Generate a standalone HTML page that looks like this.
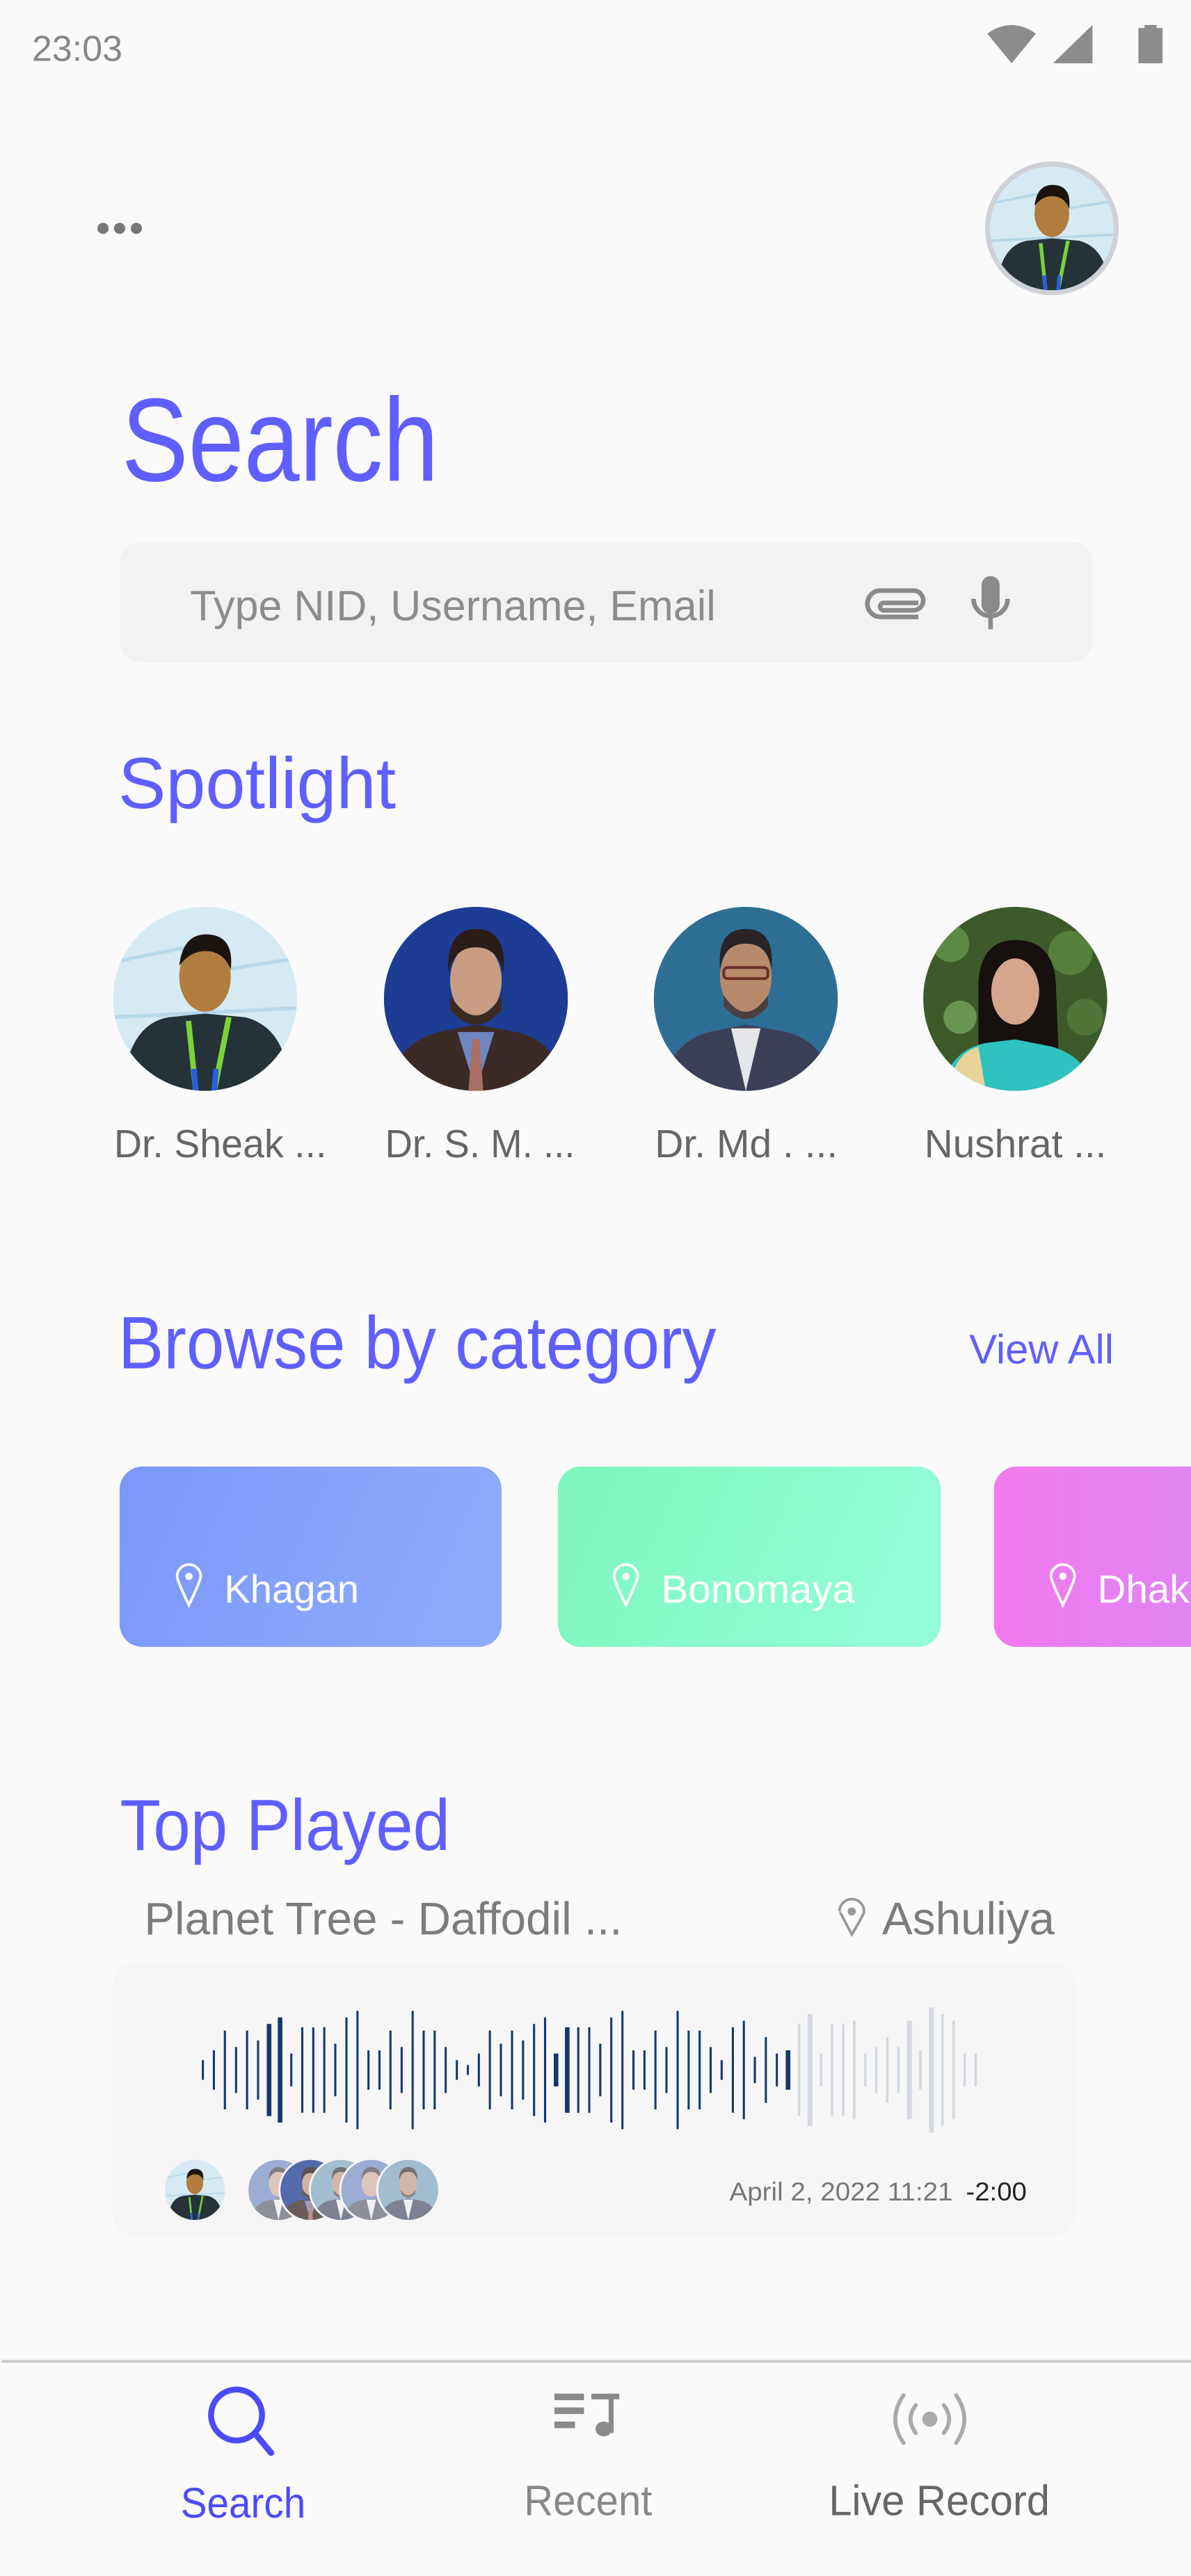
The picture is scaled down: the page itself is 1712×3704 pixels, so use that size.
<!DOCTYPE html>
<html><head><meta charset="utf-8">
<style>
html,body{margin:0;padding:0;background:#fafafa;width:1712px;height:3704px;overflow:hidden}
svg{display:block}
text{font-family:"Liberation Sans",Arial,sans-serif}
</style></head>
<body>
<svg width="1712" height="3704" viewBox="0 0 725 1568" preserveAspectRatio="none" xmlns="http://www.w3.org/2000/svg">
<defs>
<clipPath id="cc"><circle cx="50" cy="50" r="50"/></clipPath>
<linearGradient id="gb" x1="0" x2="1" y1="0" y2="0.2"><stop offset="0" stop-color="#7b97f8"/><stop offset="1" stop-color="#8eaafc"/></linearGradient>
<linearGradient id="gg" x1="0" x2="1" y1="0" y2="0.2"><stop offset="0" stop-color="#7ef6bb"/><stop offset="1" stop-color="#93fdd8"/></linearGradient>
<linearGradient id="gp" x1="0" x2="1"><stop offset="0" stop-color="#f27aee"/><stop offset="1" stop-color="#dd86f2"/></linearGradient>
<symbol id="p1" viewBox="0 0 100 100"><g clip-path="url(#cc)">
<rect width="100" height="100" fill="#d6eaf3"/>
<path d="M0 30 L40 22 M55 35 L100 28 M0 60 L100 55" stroke="#b5d8ea" stroke-width="2" fill="none"/>
<path d="M5 100 Q8 64 30 60 L50 58 L72 60 Q95 66 96 100Z" fill="#253338"/>
<ellipse cx="50" cy="38" rx="14" ry="19" fill="#b07d3e"/>
<path d="M36 32 Q38 14 52 15 Q66 16 64 34 Q60 24 50 24 Q42 24 36 32Z" fill="#1a140f"/>
<path d="M41 62 L45 100 M63 60 L55 100" stroke="#7bd33a" stroke-width="3"/>
<path d="M44 88 L45 100 M56 88 L55 100" stroke="#2a5ee0" stroke-width="3"/>
</g></symbol>
<symbol id="p2" viewBox="0 0 100 100"><g clip-path="url(#cc)">
<rect width="100" height="100" fill="#1d3c93"/>
<path d="M2 100 Q6 74 30 68 L50 64 L72 68 Q96 74 98 100Z" fill="#3b2925"/>
<path d="M40 68 L50 100 L60 68Z" fill="#6f86c0"/>
<path d="M48 72 L52 72 L54 100 L46 100Z" fill="#a96e66"/>
<ellipse cx="50" cy="40" rx="14" ry="20" fill="#c99c84"/>
<path d="M36 48 Q50 70 64 48 L64 56 Q50 72 36 56Z" fill="#3a2a22"/>
<path d="M35 36 Q34 12 50 12 Q67 12 65 36 Q62 22 50 22 Q38 22 35 36Z" fill="#2a1c16"/>
</g></symbol>
<symbol id="p3" viewBox="0 0 100 100"><g clip-path="url(#cc)">
<rect width="100" height="100" fill="#2f6e94"/>
<path d="M4 100 Q8 74 30 68 L50 64 L72 68 Q95 74 97 100Z" fill="#3c3f58"/>
<path d="M42 66 L50 100 L58 66Z" fill="#e4e6ea"/>
<ellipse cx="50" cy="38" rx="14" ry="20" fill="#b88a6c"/>
<path d="M38 48 Q50 66 62 48 L62 54 Q50 68 38 54Z" fill="#4a4040"/>
<rect x="38" y="33" width="24" height="6" rx="2" fill="none" stroke="#6b2e2a" stroke-width="1.5"/>
<path d="M36 34 Q34 12 50 12 Q66 12 64 34 Q62 20 50 20 Q38 20 36 34Z" fill="#2a2426"/>
</g></symbol>
<symbol id="p4" viewBox="0 0 100 100"><g clip-path="url(#cc)">
<rect width="100" height="100" fill="#3d5a2b"/>
<circle cx="15" cy="20" r="10" fill="#5c8a45"/><circle cx="80" cy="25" r="12" fill="#567f3c"/><circle cx="20" cy="60" r="9" fill="#6a9650"/><circle cx="88" cy="60" r="10" fill="#4f7538"/>
<path d="M30 100 L30 40 Q32 18 50 18 Q70 18 72 40 L74 90 L30 100Z" fill="#16100e"/>
<path d="M10 100 Q14 78 34 74 L50 72 L70 76 Q90 82 92 100Z" fill="#2ec2c0"/>
<path d="M14 100 Q16 80 30 76 L34 100Z" fill="#e8d49a"/>
<ellipse cx="50" cy="46" rx="13" ry="18" fill="#d6a68c"/>
</g></symbol>
<symbol id="p5" viewBox="0 0 100 100"><g clip-path="url(#cc)">
<rect width="100" height="100" fill="#7d95c8"/>
<path d="M4 100 Q8 74 30 68 L50 64 L72 68 Q95 74 97 100Z" fill="#6c6e7a"/>
<path d="M42 66 L50 100 L58 66Z" fill="#eef0f3"/>
<ellipse cx="50" cy="40" rx="16" ry="21" fill="#d8b6a6"/>
<path d="M34 34 Q34 12 50 12 Q66 12 66 34 Q62 20 50 20 Q38 20 34 34Z" fill="#5b5656"/>
</g></symbol>
<symbol id="p6" viewBox="0 0 100 100"><g clip-path="url(#cc)">
<rect width="100" height="100" fill="#86abc4"/>
<path d="M4 100 Q8 74 30 68 L50 64 L72 68 Q95 74 97 100Z" fill="#555a70"/>
<path d="M42 66 L50 100 L58 66Z" fill="#eef0f3"/>
<ellipse cx="50" cy="40" rx="15" ry="21" fill="#c7a290"/>
<path d="M38 50 Q50 68 62 50 L62 56 Q50 70 38 56Z" fill="#6a5e5a"/>
<path d="M35 34 Q34 12 50 12 Q66 12 65 34 Q62 20 50 20 Q38 20 35 34Z" fill="#4a4446"/>
</g></symbol>
</defs>

<rect width="725" height="1568" fill="#fafafa"/>

<!-- status bar -->
<text x="19.5" y="37" font-size="22" fill="#888">23:03</text>
<path d="M601 20.5 Q615.8 10 630.6 20.5 L615.8 38.5Z" fill="#8c8c8c"/>
<path d="M641 38.5 L665 15.2 L665 38.5Z" fill="#8c8c8c"/>
<rect x="696.7" y="15.2" width="7.3" height="2.5" fill="#8c8c8c"/>
<rect x="693" y="17" width="14.7" height="21.5" fill="#8c8c8c"/>

<!-- dots + avatar -->
<circle cx="62.7" cy="139" r="3.4" fill="#777"/><circle cx="72.8" cy="139" r="3.4" fill="#777"/><circle cx="83" cy="139" r="3.4" fill="#777"/>
<circle cx="640.3" cy="139" r="40.7" fill="#cfd1d6"/>
<use href="#p1" x="602.6" y="101.3" width="75.4" height="75.4"/>

<!-- title -->
<text x="74" y="292.6" font-size="72" fill="#5f5fff" textLength="193" lengthAdjust="spacingAndGlyphs">Search</text>

<!-- search box -->
<rect x="73" y="330" width="592" height="73" rx="12" fill="#f2f2f2"/>
<text x="115.7" y="377.6" font-size="26" fill="#8c8c8c" textLength="320" lengthAdjust="spacingAndGlyphs">Type NID, Username, Email</text>
<path d="M559 375.5 H536 A8 8 0 0 1 536 359.5 H556 A6 6 0 0 1 556 371.5 H538 A2.2 2.2 0 0 1 538 367 H559" fill="none" stroke="#8a8a8a" stroke-width="2.8"/>
<rect x="597.5" y="350.6" width="11" height="23" rx="5.5" fill="#8a8a8a"/>
<path d="M592.6 364.5 A10.4 10.4 0 0 0 613.4 364.5" fill="none" stroke="#8a8a8a" stroke-width="2.8"/>
<rect x="601.6" y="374" width="2.8" height="9" fill="#8a8a8a"/>

<!-- spotlight -->
<text x="72" y="492" font-size="44" fill="#5f5fff" textLength="169" lengthAdjust="spacingAndGlyphs">Spotlight</text>
<use href="#p1" x="68.8" y="552" width="112" height="112"/>
<use href="#p2" x="233.7" y="552" width="112" height="112"/>
<use href="#p3" x="398" y="552" width="112" height="112"/>
<use href="#p4" x="562" y="552" width="112" height="112"/>
<text x="69.4" y="704.5" font-size="24" fill="#666" textLength="129.4" lengthAdjust="spacingAndGlyphs">Dr. Sheak ...</text>
<text x="234.4" y="704.5" font-size="24" fill="#666" textLength="115.6" lengthAdjust="spacingAndGlyphs">Dr. S. M. ...</text>
<text x="398.6" y="704.5" font-size="24" fill="#666" textLength="111.4" lengthAdjust="spacingAndGlyphs">Dr. Md . ...</text>
<text x="562.7" y="704.5" font-size="24" fill="#666" textLength="110.8" lengthAdjust="spacingAndGlyphs">Nushrat ...</text>

<!-- browse -->
<text x="72" y="833" font-size="45" fill="#5f5fff" textLength="364" lengthAdjust="spacingAndGlyphs">Browse by category</text>
<text x="590" y="830" font-size="25" fill="#5f5fff" textLength="88" lengthAdjust="spacingAndGlyphs">View All</text>

<rect x="72.8" y="892.7" width="232.6" height="109.8" rx="14" fill="url(#gb)"/>
<rect x="339.6" y="892.7" width="233" height="109.8" rx="14" fill="url(#gg)"/>
<rect x="605" y="892.7" width="140" height="109.8" rx="14" fill="url(#gp)"/>
<g fill="none" stroke="#fff" stroke-width="1.6">
<path d="M115 977 Q107.8 962 107.8 959.5 A7.2 7.2 0 0 1 122.2 959.5 Q122.2 962 115 977Z"/>
<path d="M381 977 Q373.8 962 373.8 959.5 A7.2 7.2 0 0 1 388.2 959.5 Q388.2 962 381 977Z"/>
<path d="M647 977 Q639.8 962 639.8 959.5 A7.2 7.2 0 0 1 654.2 959.5 Q654.2 962 647 977Z"/>
</g>
<circle cx="115" cy="959.5" r="2.2" fill="#fff"/><circle cx="381" cy="959.5" r="2.2" fill="#fff"/><circle cx="647" cy="959.5" r="2.2" fill="#fff"/>
<text x="136.5" y="975.5" font-size="24" fill="#fff" textLength="82" lengthAdjust="spacingAndGlyphs">Khagan</text>
<text x="402.5" y="975.5" font-size="24" fill="#fff" textLength="118" lengthAdjust="spacingAndGlyphs">Bonomaya</text>
<text x="668" y="975.5" font-size="24" fill="#fff">Dhaka</text>

<!-- top played -->
<text x="73" y="1126" font-size="44" fill="#5f5fff" textLength="201" lengthAdjust="spacingAndGlyphs">Top Played</text>
<text x="87.8" y="1177.5" font-size="28" fill="#7c7c7c" textLength="291" lengthAdjust="spacingAndGlyphs">Planet Tree - Daffodil ...</text>
<path d="M518.5 1177.5 Q511 1163 511 1163.5 A7.5 7.5 0 0 1 526 1163.5 Q526 1165 518.5 1177.5Z" fill="none" stroke="#999" stroke-width="1.6"/>
<circle cx="518.5" cy="1163.5" r="2.5" fill="#999"/>
<text x="537" y="1177.5" font-size="28" fill="#7c7c7c" textLength="105" lengthAdjust="spacingAndGlyphs">Ashuliya</text>

<rect x="68.4" y="1194" width="587.2" height="168" rx="16" fill="#f6f6f6"/>
<path stroke="#12386f" stroke-width="1.3" fill="none" d="M123.5 1254v12M130.2 1248v24M136.9 1236v48M143.7 1246v28M150.4 1236v48M157.1 1242v36M163.8 1232v56M170.5 1228v64M177.3 1250v20M184 1234v52M190.7 1234v52M197.4 1234v52M204.1 1244v32M210.9 1228v64M217.6 1224v72M224.3 1248v24M231 1248v24M237.7 1236v48M244.5 1246v28M251.2 1224v72M257.9 1236v48M264.6 1236v48M271.3 1246v28M278.1 1254v12M284.8 1257v6M291.5 1250v20M298.2 1236v48M304.9 1244v32M311.7 1236v48M318.4 1242v36M325.1 1232v56M331.8 1228v64M338.5 1250v20M345.3 1234v52M352 1234v52M358.7 1234v52M365.4 1244v32M372.1 1228v64M378.9 1224v72M385.6 1248v24M392.3 1248v24M399 1236v48M405.7 1246v28M412.5 1224v72M419.2 1236v48M425.9 1236v48M432.6 1246v28M439.3 1254v12M446.1 1234v52M452.8 1230v60M459.5 1252v16M466.2 1240v40M472.9 1250v20M479.7 1248v24"/>
<path stroke="#12386f" stroke-width="2.8" fill="none" d="M163.8 1232v56M170.5 1228v64M338.5 1250v20M345.3 1234v52M479.7 1248v24"/>
<path stroke="#d3d8e2" stroke-width="1.5" fill="none" d="M486.4 1232v56M493.1 1226v68M499.8 1250v20M506.5 1232v56M513.3 1232v56M520 1230v60M526.7 1250v20M533.4 1246v28M540.1 1240v40M546.9 1246v28M553.6 1230v60M560.3 1248v24M567 1222v76M573.7 1226v68M580.5 1230v60M587.2 1250v20M593.9 1250v20"/>
<path stroke="#d3d8e2" stroke-width="3" fill="none" d="M493.1 1226v68M553.6 1230v60M567 1222v76"/>

<use href="#p1" x="100.3" y="1314.7" width="36.6" height="36.6"/>
<g opacity="0.75">
<circle cx="169.5" cy="1333" r="19.5" fill="#f6f6f6"/><use href="#p5" x="151.2" y="1314.7" width="36.6" height="36.6"/>
<circle cx="189" cy="1333" r="19.5" fill="#f6f6f6"/><use href="#p2" x="170.7" y="1314.7" width="36.6" height="36.6"/>
<circle cx="207.5" cy="1333" r="19.5" fill="#f6f6f6"/><use href="#p6" x="189.2" y="1314.7" width="36.6" height="36.6"/>
<circle cx="226" cy="1333" r="19.5" fill="#f6f6f6"/><use href="#p5" x="207.7" y="1314.7" width="36.6" height="36.6"/>
<circle cx="248.5" cy="1333" r="19.5" fill="#f6f6f6"/><use href="#p6" x="230.2" y="1314.7" width="36.6" height="36.6"/>
</g>
<text x="444" y="1339.5" font-size="15.5" fill="#777" textLength="136" lengthAdjust="spacingAndGlyphs">April 2, 2022 11:21</text>
<text x="588" y="1339.5" font-size="15.5" fill="#222" textLength="37" lengthAdjust="spacingAndGlyphs">-2:00</text>

<!-- bottom nav -->
<rect x="1" y="1436.5" width="724" height="1.8" fill="#cccccc"/>
<circle cx="144" cy="1470" r="15.5" fill="none" stroke="#4b4bf8" stroke-width="3.6"/>
<path d="M155 1481 L165 1493" stroke="#4b4bf8" stroke-width="3.8" stroke-linecap="round"/>
<text x="110" y="1532.5" font-size="26" fill="#4b4bf8" textLength="76" lengthAdjust="spacingAndGlyphs">Search</text>

<g fill="#8a8a8a">
<rect x="337.5" y="1457" width="18" height="4"/><rect x="337.5" y="1465.4" width="18" height="4"/><rect x="337.5" y="1474" width="12.5" height="4"/>
<rect x="360" y="1457" width="17" height="3.5"/><rect x="370.5" y="1457" width="3" height="24"/>
<ellipse cx="367.5" cy="1478.5" rx="5" ry="4.5"/>
</g>
<text x="319" y="1531" font-size="26" fill="#888" textLength="78" lengthAdjust="spacingAndGlyphs">Recent</text>

<g fill="none" stroke="#aaa" stroke-width="2.4" stroke-linecap="round">
<path d="M550 1458 Q540 1472.5 550 1487"/><path d="M582 1458 Q592 1472.5 582 1487"/>
<path d="M557.5 1464 Q551 1472.5 557.5 1481"/><path d="M574.5 1464 Q581 1472.5 574.5 1481"/>
</g>
<circle cx="566" cy="1472.5" r="4.6" fill="#aaa"/>
<text x="504.5" y="1531" font-size="26" fill="#666" textLength="134.5" lengthAdjust="spacingAndGlyphs">Live Record</text>
</svg>
</body></html>
